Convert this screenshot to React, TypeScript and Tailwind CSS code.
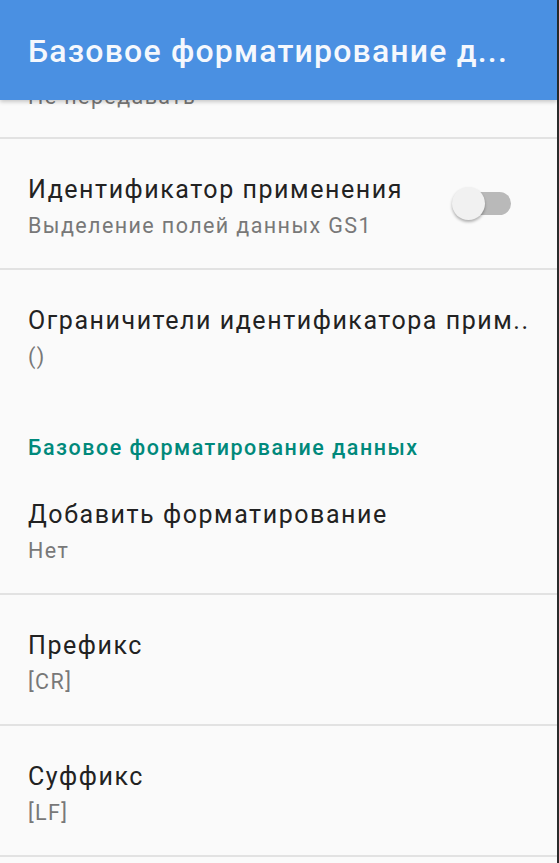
import React from "react";

const font = { fontFamily: "Roboto, 'Noto Sans', sans-serif" };

function Divider() {
  return <div className="h-[2px] w-full bg-[#e2e2e2]" />;
}

function Item({
  title,
  summary,
  toggle,
  shiftSummary,
}: {
  title: string;
  summary: string;
  toggle?: boolean;
  shiftSummary?: boolean;
}) {
  return (
    <div className="flex h-[129px] items-center pl-[28px] pr-[46px]">
      <div className="flex-1 min-w-0 self-stretch pt-[34px]">
        <div className="whitespace-nowrap text-[25px] leading-[34px] tracking-[1.55px] text-[#222222]">{title}</div>
        <div
          className={`whitespace-nowrap text-[21.5px] leading-[30px] tracking-[1.4px] text-[#787878] ${
            shiftSummary ? "mt-[6px]" : "mt-[4px]"
          }`}
        >
          {summary}
        </div>
      </div>
      {toggle && (
        <div className="relative h-[34px] w-[59px] shrink-0">
          <div className="absolute right-0 top-[5px] h-[23px] w-[54px] rounded-full bg-[#b9b9b9]" />
          <div className="absolute left-0 top-0 h-[33px] w-[33px] rounded-full bg-[#f1f1f1] shadow-[0_2px_3px_rgba(0,0,0,0.3)]" />
        </div>
      )}
    </div>
  );
}

export default function App() {
  return (
    <div className="flex h-[863px] w-[559px] overflow-hidden bg-[#fafafa]" style={font}>
      <div className="flex w-[557px] flex-col">
        <div className="relative z-10 flex h-[100px] shrink-0 items-center bg-[#4a90e2] pl-[28px] pt-[1px] shadow-[0_2px_4px_rgba(0,0,0,0.2)]">
          <div className="whitespace-nowrap text-[32px] font-medium tracking-[1.2px] text-[#f5f8fd]">
            Базовое форматирование д...
          </div>
        </div>
        <div className="flex-1 overflow-hidden">
          <div className="-mt-[92px]">
            <Item title="Передавать управляющие символы" summary="Не передавать" shiftSummary />
          </div>
          <Divider />
          <Item title="Идентификатор применения" summary="Выделение полей данных GS1" toggle />
          <Divider />
          <Item title="Ограничители идентификатора прим.." summary="()" />
          <div className="flex h-[65px] items-end pb-[1px] pl-[28px]">
            <div className="text-[21.5px] font-medium leading-[30px] tracking-[1.5px] text-[#00897b]">
              Базовое форматирование данных
            </div>
          </div>
          <Item title="Добавить форматирование" summary="Нет" />
          <Divider />
          <Item title="Префикс" summary="[CR]" />
          <Divider />
          <Item title="Суффикс" summary="[LF]" />
          <Divider />
        </div>
      </div>
      <div className="h-full w-[2px] bg-[#2b2b2b]" />
    </div>
  );
}
